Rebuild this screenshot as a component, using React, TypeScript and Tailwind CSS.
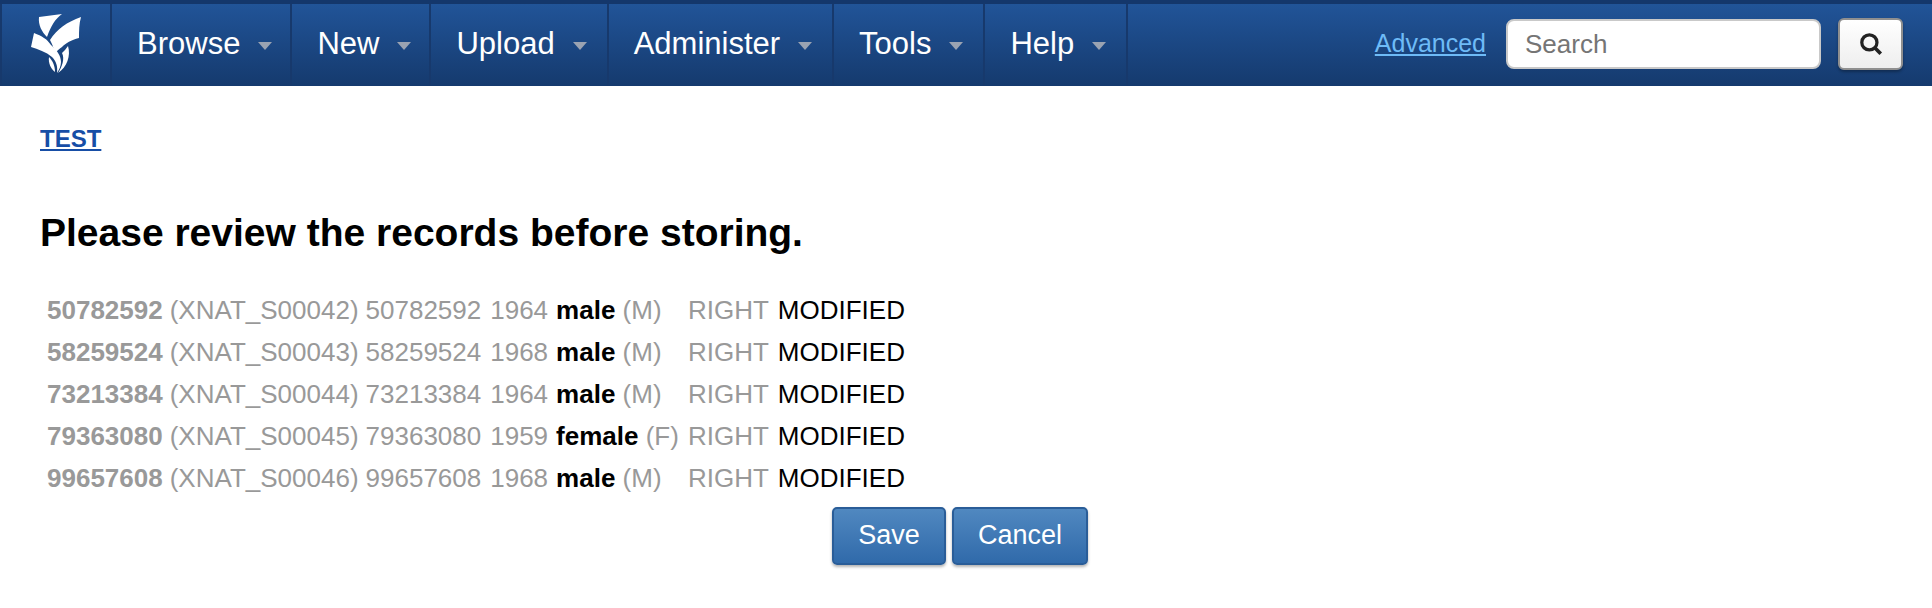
const navItems = [
  { label: "Browse", spacing: "pr-[18px]" },
  { label: "New", spacing: "pr-[18px]" },
  { label: "Upload", spacing: "pr-[20px]" },
  { label: "Administer", spacing: "pr-[20px]" },
  { label: "Tools", spacing: "pr-[20px]" },
  { label: "Help", spacing: "pr-[20px]" },
];

const records = [
  { label: "50782592", id: "XNAT_S00042", year: "1964", gender: "male", code: "M" },
  { label: "58259524", id: "XNAT_S00043", year: "1968", gender: "male", code: "M" },
  { label: "73213384", id: "XNAT_S00044", year: "1964", gender: "male", code: "M" },
  { label: "79363080", id: "XNAT_S00045", year: "1959", gender: "female", code: "F" },
  { label: "99657608", id: "XNAT_S00046", year: "1968", gender: "male", code: "M" },
];

const Logo = () => (
  <svg width="56" height="64" viewBox="28 12 56 64" className="text-white">
    <path fill="currentColor" d="M39 17 L62 14 C55 19 51 26 47 37 C42 32 38 25 39 17Z" />
    <path fill="currentColor" d="M81 17 C79 24 79 31 79 38 C71 40 66 43 62 47 C59 49 57 51 55 53 C54 48 52 44 50 40 C57 29 67 22 81 17Z" />
    <path fill="currentColor" d="M34 33 C42 36 47 39 51 45 C57 50 61 56 61 62 C61 66 59 70 57 73 C58 66 56 61 52 57 C46 52 38 49 31 47Z" />
    <path fill="currentColor" d="M68 46 C71 56 67 67 58 73 C62 67 65 59 62 53 C64 51 66 49 68 46Z" />
    <path fill="currentColor" d="M49 57 C52 60 55 65 55 72 C51 69 48 63 49 57Z" />
  </svg>
);

const NavItem = ({ label, spacing }: { label: string; spacing: string }) => (
  <div className={`flex h-full items-center gap-[18px] border-r-2 border-[#17396c] pb-[2px] pl-[25px] ${spacing}`}>
    <span className="text-[31px] text-white">{label}</span>
    <span className="mt-[3px] h-0 w-0 border-x-[7px] border-t-[8px] border-x-transparent border-t-[#9aa3b2]" />
  </div>
);

const ActionButton = ({ label, width }: { label: string; width: string }) => (
  <button
    className={`h-[58px] ${width} rounded-[5px] border-2 border-[#2a5d98] bg-gradient-to-b from-[#5088c0] to-[#306aaa] text-[27px] text-white shadow-[0_2px_3px_rgba(0,0,0,0.3)]`}
  >
    {label}
  </button>
);

export default function App() {
  return (
    <div className="min-h-[608px] bg-white font-['Liberation_Sans',Arial,sans-serif]">
      <nav className="flex h-[86px] items-stretch border-t-4 border-[#14376b] bg-gradient-to-b from-[#215498] to-[#153a6e]">
        <div className="flex w-[112px] items-center justify-center border-x-2 border-l-[#17396c] border-r-[#17396c] pb-[2px]">
          <Logo />
        </div>
        {navItems.map((item) => (
          <NavItem key={item.label} label={item.label} spacing={item.spacing} />
        ))}
        <div className="ml-auto flex items-center pb-[2px] pr-[29px]">
          <a className="mr-[20px] text-[25px] text-[#6ebbf7] underline">Advanced</a>
          <div className="flex h-[50px] w-[315px] items-center rounded-[8px] border-2 border-[#c9c9c9] bg-white pl-[17px] text-[26px] text-[#757575]">
            Search
          </div>
          <button className="ml-[17px] flex h-[52px] w-[65px] items-center justify-center rounded-[6px] border-2 border-[#8f8f8f] bg-gradient-to-b from-white to-[#eeeeee] shadow-[0_2px_3px_rgba(0,0,0,0.3)]">
            <svg width="26" height="26" viewBox="0 0 24 24" fill="none" stroke="#222222">
              <circle cx="10.5" cy="10.5" r="7" strokeWidth="3" />
              <path d="M15.5 15.5 L21 21" strokeWidth="3.4" />
            </svg>
          </button>
        </div>
      </nav>

      <main className="px-[40px] pt-[35px]">
        <a className="text-[24px] font-bold text-[#174ea6] underline">TEST</a>
        <h1 className="mt-[47px] text-[39px] font-bold text-black">Please review the records before storing.</h1>
        <table className="mt-[26px] ml-[1px] border-collapse text-[26px] leading-[42px] text-[#999999]">
          <tbody>
            {records.map((r) => (
              <tr key={r.id} className="h-[42px]">
                <td className="pl-[6px] font-bold">{r.label}</td>
                <td className="pl-[7px]">({r.id})</td>
                <td className="pl-[7px]">{r.label}</td>
                <td className="pl-[9px]">{r.year}</td>
                <td className="pl-[8px] pr-[4px]">
                  <b className="text-black">{r.gender}</b> ({r.code})
                </td>
                <td className="pl-[5px]">RIGHT</td>
                <td className="pl-[9px] text-black">MODIFIED</td>
              </tr>
            ))}
          </tbody>
        </table>
        <div className="mt-[8px] ml-[792px] flex gap-[6px]">
          <ActionButton label="Save" width="w-[114px]" />
          <ActionButton label="Cancel" width="w-[136px]" />
        </div>
      </main>
    </div>
  );
}
